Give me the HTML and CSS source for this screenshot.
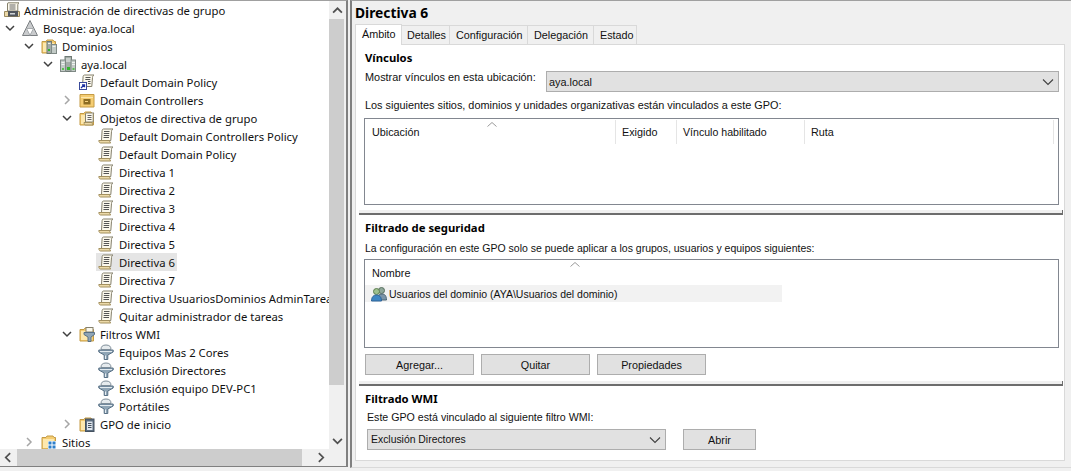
FILE: index.html
```html
<!DOCTYPE html>
<html lang="es">
<head>
<meta charset="utf-8">
<title>Administración de directivas de grupo</title>
<link rel="stylesheet" href="styles.css">
</head>
<body>
<svg class="defs" width="0" height="0" aria-hidden="true">
  <defs>
    <symbol id="scroll" viewBox="0 0 16 16">
      <path d="M5.500 1h9.500c-1 .6-1.500 1.500-1.500 2.500l-.7 9H3.500l.6-10C4.200 1.600 4.800 1 5.500 1z" fill="#fbf8ec" stroke="#85806c"/>
      <path d="M.8 12.500h10.700c.1 1 .5 1.700 1.200 2.500H2.500C1.500 15 .8 13.700.8 12.500z" fill="#ecd9a8" stroke="#a3905f"/>
      <path d="M6 3.500h5.500M5.800 5.500h5.500M5.700 7.500h5.500M5.500 9.500h5.500" stroke="#555" stroke-width="1.100"/>
    </symbol>
    <symbol id="gpolink" viewBox="0 0 16 16">
      <path d="M5.500 1h9.500c-1 .6-1.500 1.500-1.500 2.500l-.7 9H3.500l.6-10C4.200 1.600 4.800 1 5.500 1z" fill="#fbf8ec" stroke="#85806c"/>
      <path d="M6.500 3.500h5M6.300 5.500h5M9 7.500h2.500M9 9.500h2.500" stroke="#555" stroke-width="1.100"/>
      <rect x=".5" y="8.500" width="7" height="7" fill="#fff" stroke="#3a4a9a"/>
      <path d="M2 14l3-3M3 10.800h2.500v2.500" fill="none" stroke="#1c2fa0" stroke-width="1.300"/>
    </symbol>
    <symbol id="filter" viewBox="0 0 16 16">
      <path d="M.8 6h14.400v2L9.800 11v4.500H6.200V11L.8 8z" fill="#8fa5b6" stroke="#587085"/>
      <path d="M3 5.500c0-3 1.500-4.500 5-4.500s5 1.500 5 4.500z" fill="#e6ebee" stroke="#7e8d99"/>
      <path d="M2 7.500h12" stroke="#e3ebf0"/>
      <path d="M7.500 11.500v3.500" stroke="#e6edf2"/>
    </symbol>
    <symbol id="folder" viewBox="0 0 16 16">
      <path d="M1 3.500h4l1-1.500h6l1 1.500h1.500v11.500H1z" fill="#f5cd72" stroke="#c49b45"/>
      <path d="M2 5h11v9H2z" fill="#fde8ae"/>
    </symbol>
    <symbol id="server" viewBox="0 0 16 16">
      <rect x="5" y=".5" width="6.500" height="15" fill="#a3aca7" stroke="#6f7a75"/>
      <rect x=".5" y="4" width="5" height="11.500" fill="#c2cac6" stroke="#7f8985"/>
      <rect x="11" y="4" width="4.500" height="11.500" fill="#c2cac6" stroke="#7f8985"/>
      <path d="M6 3h4.500M6 5h4.500M1.500 6.500h3M12 6.500h3M1.500 8.500h3M12 8.500h3" stroke="#eef1ef"/>
      <rect x="7" y="11" width="3" height="3" fill="#32b52d"/>
      <rect x="2" y="12" width="2" height="2" fill="#58c24f"/>
      <rect x="12.500" y="12" width="2" height="2" fill="#58c24f"/>
    </symbol>
  </defs>
</svg>

<div class="app">
  <section class="left-pane">
    <div class="tree-body">
      <div class="tree">
        <div class="row lvl-0">
          <span class="twisty"></span>
          <svg class="icon" viewBox="0 0 16 16"><path d="M4 .8h11c-.8.500-1.200 1.200-1.200 2V9H3.500V2c0-.8.200-1.200.5-1.200z" fill="#fbf8ec" stroke="#85806c"/><path d="M5.500 3h6M5.500 5h6M5.500 7h6" stroke="#666"/><path d="M.5 9.500h15v5H.5z" fill="#ecd9a8" stroke="#9a8a5e"/><rect x="4" y="9" width="10" height="5.500" fill="#50565e"/><rect x="6" y="11" width="5" height="1.500" fill="#cfd4d8"/></svg>
          <span class="label">Administración de directivas de grupo</span>
        </div>
        <div class="row lvl-1">
          <svg class="twisty" viewBox="0 0 10 10"><path class="open" d="M1 3l4 4 4-4"/></svg>
          <svg class="icon" viewBox="0 0 16 16"><path d="M8 .5l7.500 15H.5z" fill="#c9cbcd" stroke="#7c8083"/><path d="M4.500 8.500h7L8 15.300z" fill="#fff" stroke="#a6aaad"/></svg>
          <span class="label">Bosque: aya.local</span>
        </div>
        <div class="row lvl-2">
          <svg class="twisty" viewBox="0 0 10 10"><path class="open" d="M1 3l4 4 4-4"/></svg>
          <svg class="icon" viewBox="0 0 16 16"><use href="#folder"/><rect x="6" y="3.500" width="4.500" height="12" fill="#a3aca7" stroke="#6f7a75"/><rect x="10.500" y="6.500" width="5" height="9" fill="#c2cac6" stroke="#7f8985"/><path d="M7 5.500h2.500M11.500 8.500h3" stroke="#eef1ef"/><rect x="7" y="11" width="2" height="2" fill="#32b52d"/></svg>
          <span class="label">Dominios</span>
        </div>
        <div class="row lvl-3">
          <svg class="twisty" viewBox="0 0 10 10"><path class="open" d="M1 3l4 4 4-4"/></svg>
          <svg class="icon"><use href="#server"/></svg>
          <span class="label">aya.local</span>
        </div>
        <div class="row lvl-4">
          <span class="twisty"></span>
          <svg class="icon"><use href="#gpolink"/></svg>
          <span class="label">Default Domain Policy</span>
        </div>
        <div class="row lvl-4">
          <svg class="twisty" viewBox="0 0 10 10"><path class="closed" d="M3 1l4 4-4 4"/></svg>
          <svg class="icon" viewBox="0 0 16 16"><path d="M1 2.500h14v12.500H1z" fill="#f5cd72" stroke="#c49b45"/><path d="M2 5.500h12" stroke="#fde8ae"/><rect x="4.500" y="7" width="7" height="5.500" fill="#8c6d22"/><path d="M6 9.500h3" stroke="#f6d27e"/></svg>
          <span class="label">Domain Controllers</span>
        </div>
        <div class="row lvl-4">
          <svg class="twisty" viewBox="0 0 10 10"><path class="open" d="M1 3l4 4 4-4"/></svg>
          <svg class="icon" viewBox="0 0 16 16"><use href="#folder"/><path d="M7 3h8c-.6.500-.8 1-.8 1.800V12H6.500V4c0-.5.100-1 .5-1z" fill="#fbf8ec" stroke="#85806c"/><path d="M8.500 5.500h4M8.500 7.500h4M8.500 9.500h4" stroke="#666"/><path d="M5 12.500h8c.2 1 .5 1.800 1 2.500H6.500C5.500 15 5 13.500 5 12.500z" fill="#ecd9a8" stroke="#a3905f"/></svg>
          <span class="label">Objetos de directiva de grupo</span>
        </div>
        <div class="row lvl-5"><span class="twisty"></span><svg class="icon"><use href="#scroll"/></svg><span class="label">Default Domain Controllers Policy</span></div>
        <div class="row lvl-5"><span class="twisty"></span><svg class="icon"><use href="#scroll"/></svg><span class="label">Default Domain Policy</span></div>
        <div class="row lvl-5"><span class="twisty"></span><svg class="icon"><use href="#scroll"/></svg><span class="label">Directiva 1</span></div>
        <div class="row lvl-5"><span class="twisty"></span><svg class="icon"><use href="#scroll"/></svg><span class="label">Directiva 2</span></div>
        <div class="row lvl-5"><span class="twisty"></span><svg class="icon"><use href="#scroll"/></svg><span class="label">Directiva 3</span></div>
        <div class="row lvl-5"><span class="twisty"></span><svg class="icon"><use href="#scroll"/></svg><span class="label">Directiva 4</span></div>
        <div class="row lvl-5"><span class="twisty"></span><svg class="icon"><use href="#scroll"/></svg><span class="label">Directiva 5</span></div>
        <div class="row lvl-5"><span class="twisty"></span><span class="selected"><svg class="icon"><use href="#scroll"/></svg><span class="label">Directiva 6</span></span></div>
        <div class="row lvl-5"><span class="twisty"></span><svg class="icon"><use href="#scroll"/></svg><span class="label">Directiva 7</span></div>
        <div class="row lvl-5"><span class="twisty"></span><svg class="icon"><use href="#scroll"/></svg><span class="label">Directiva UsuariosDominios AdminTareas</span></div>
        <div class="row lvl-5"><span class="twisty"></span><svg class="icon"><use href="#scroll"/></svg><span class="label">Quitar administrador de tareas</span></div>
        <div class="row lvl-4">
          <svg class="twisty" viewBox="0 0 10 10"><path class="open" d="M1 3l4 4 4-4"/></svg>
          <svg class="icon" viewBox="0 0 16 16"><use href="#folder"/><rect x="7" y="1.500" width="7" height="4.500" fill="#fbf8ec" stroke="#85806c"/><path d="M5 6.500h10.500v2L12 11v4.500H9V11L5 8.500z" fill="#8fa5b6" stroke="#587085"/></svg>
          <span class="label">Filtros WMI</span>
        </div>
        <div class="row lvl-5"><span class="twisty"></span><svg class="icon"><use href="#filter"/></svg><span class="label">Equipos Mas 2 Cores</span></div>
        <div class="row lvl-5"><span class="twisty"></span><svg class="icon"><use href="#filter"/></svg><span class="label">Exclusión Directores</span></div>
        <div class="row lvl-5"><span class="twisty"></span><svg class="icon"><use href="#filter"/></svg><span class="label">Exclusión equipo DEV-PC1</span></div>
        <div class="row lvl-5"><span class="twisty"></span><svg class="icon"><use href="#filter"/></svg><span class="label">Portátiles</span></div>
        <div class="row lvl-4">
          <svg class="twisty" viewBox="0 0 10 10"><path class="closed" d="M3 1l4 4-4 4"/></svg>
          <svg class="icon" viewBox="0 0 16 16"><use href="#folder"/><rect x="6.500" y="3" width="8.500" height="12.500" fill="#5b6d80" stroke="#44515f"/><rect x="8" y="5.500" width="5.500" height="8.500" fill="#dfe6ee"/><path d="M9 7.500h3.500M9 9.500h3.500M9 11.500h3.500" stroke="#44515f"/></svg>
          <span class="label">GPO de inicio</span>
        </div>
        <div class="row lvl-2">
          <svg class="twisty" viewBox="0 0 10 10"><path class="closed" d="M3 1l4 4-4 4"/></svg>
          <svg class="icon" viewBox="0 0 16 16"><use href="#folder"/><rect x="7" y="7" width="8.500" height="8" fill="#fff"/><path d="M7.500 7.500h3v3h-3zM11.500 7.500h3v3h-3zM7.500 11.500h3v3h-3zM11.500 11.500h3v3h-3z" fill="#2e7fc9"/></svg>
          <span class="label">Sitios</span>
        </div>
      </div>
      <div class="vscroll">
        <svg class="sb-arrow" viewBox="0 0 10 10"><path d="M1 7l4-4 4 4"/></svg>
        <div class="vtrack"><div class="vthumb"></div></div>
        <svg class="sb-arrow" viewBox="0 0 10 10"><path d="M1 3.500l4 4 4-4"/></svg>
      </div>
    </div>
    <div class="hscroll">
      <svg class="sb-arrow" viewBox="0 0 10 10"><path d="M6.500 1l-4 4 4 4"/></svg>
      <div class="htrack"><div class="hthumb"></div></div>
      <svg class="sb-arrow" viewBox="0 0 10 10"><path d="M3.500 1l4 4-4 4"/></svg>
    </div>
  </section>

  <section class="right-pane">
    <h1 class="title">Directiva 6</h1>
    <div class="tabs">
      <span class="tab active">Ámbito</span>
      <span class="tab tab-details">Detalles</span>
      <span class="tab tab-config">Configuración</span>
      <span class="tab tab-deleg">Delegación</span>
      <span class="tab tab-state">Estado</span>
    </div>
    <div class="tab-page">
      <div class="links">
        <h2 class="heading">Vínculos</h2>
        <div class="show-row">
          <span class="show-label">Mostrar vínculos en esta ubicación:</span>
          <div class="combo combo-wide"><span>aya.local</span><svg class="chev" viewBox="0 0 12 8"><path d="M1 1.500l5 5 5-5"/></svg></div>
        </div>
        <p class="note note-links">Los siguientes sitios, dominios y unidades organizativas están vinculados a este GPO:</p>
        <div class="list list-links">
          <div class="list-head">
            <svg class="sort" viewBox="0 0 10 5"><path d="M.5 4.500L5 .5l4.500 4"/></svg>
            <span class="col col-loc">Ubicación</span>
            <span class="col col-req">Exigido</span>
            <span class="col col-en">Vínculo habilitado</span>
            <span class="col col-path">Ruta</span>
          </div>
        </div>
      </div>
      <div class="splitter"></div>
      <div class="security">
        <h2 class="heading">Filtrado de seguridad</h2>
        <p class="note note-sec">La configuración en este GPO solo se puede aplicar a los grupos, usuarios y equipos siguientes:</p>
        <div class="list list-sec">
          <div class="list-head head-sec">
            <svg class="sort sort-sec" viewBox="0 0 10 5"><path d="M.5 4.500L5 .5l4.500 4"/></svg>
            <span class="col">Nombre</span>
          </div>
          <div class="list-item">
            <svg class="user-icon" viewBox="0 0 16 16"><circle cx="10.500" cy="4.500" r="3" fill="#8fa79a" stroke="#58705f"/><path d="M6 14c0-4 2-6 5-6s4.500 2 4.500 6z" fill="#7c95a8" stroke="#4c6474"/><circle cx="5.500" cy="5.500" r="3" fill="#9dc08e" stroke="#5c7d4f"/><path d="M.5 15c0-4 2-6 5-6s5 2 5 6z" fill="#3f86c2" stroke="#2c6397"/></svg>
            <span>Usuarios del dominio (AYA\Usuarios del dominio)</span>
          </div>
        </div>
        <div class="buttons">
          <button class="btn">Agregar...</button>
          <button class="btn">Quitar</button>
          <button class="btn">Propiedades</button>
        </div>
      </div>
      <div class="splitter"></div>
      <div class="wmi">
        <h2 class="heading">Filtrado WMI</h2>
        <p class="note note-wmi">Este GPO está vinculado al siguiente filtro WMI:</p>
        <div class="wmi-row">
          <div class="combo combo-wmi"><span>Exclusión Directores</span><svg class="chev" viewBox="0 0 12 8"><path d="M1 1.500l5 5 5-5"/></svg></div>
          <button class="btn btn-open">Abrir</button>
        </div>
      </div>
    </div>
  </section>
</div>
</body>
</html>
```
FILE: styles.css
```css
* { box-sizing: border-box; }
html, body { margin: 0; height: 100%; }
body {
  width: 1071px;
  height: 471px;
  overflow: hidden;
  background: #f0f0f0;
  color: #111;
  font-family: "Noto Sans", "Open Sans", sans-serif;
  font-size: 11.3px;
}
.defs { display: block; height: 0; }
.app { display: flex; align-items: flex-start; height: 471px; }

/* left pane */
.left-pane {
  width: 348px;
  height: 467px;
  flex: none;
  background: #fff;
  border-top: 1px solid #a0a0a0;
  border-bottom: 1px solid #808080;
  border-right: 2px solid #808080;
  display: flex;
  flex-direction: column;
}
.tree-body { display: flex; height: 448px; flex: none; }
.tree { width: 329px; flex: none; overflow: hidden; }
.row { display: flex; align-items: center; height: 18px; white-space: nowrap; }
.twisty { width: 10px; height: 10px; flex: none; margin-right: 7px; }
.twisty path { fill: none; stroke-width: 1.5; }
.twisty .open { stroke: #404040; }
.twisty .closed { stroke: #a6a6a6; }
.icon { width: 16px; height: 16px; flex: none; margin-right: 5px; }
.lvl-0 .twisty { width: 4px; margin-right: 0; }
.lvl-0 .icon { margin-right: 4px; }
.lvl-1 { padding-left: 5px; }
.lvl-2 { padding-left: 24px; }
.lvl-3 { padding-left: 43px; }
.lvl-4 { padding-left: 62px; }
.lvl-5 { padding-left: 81px; }
.selected {
  display: flex;
  align-items: center;
  height: 18px;
  width: 81px;
  margin-left: -2px;
  padding-left: 2px;
  background: #e5e5e5;
}

.vscroll { width: 17px; flex: none; background: #f0f0f0; display: flex; flex-direction: column; padding-top: 1px; }
.hscroll { height: 17px; flex: none; background: #f0f0f0; display: flex; padding-right: 17px; }
.sb-arrow { width: 17px; height: 17px; flex: none; padding: 3px; }
.sb-arrow path { fill: none; stroke: #505050; stroke-width: 1.6; }
.vtrack { flex: 1; }
.vthumb { width: 15px; height: 366px; background: #cdcdcd; }
.htrack { flex: 1; }
.hthumb { width: 285px; height: 100%; background: #cdcdcd; }

/* right pane */
.right-pane {
  width: 721px;
  margin-left: 2px;
  height: 468px;
  flex: none;
  border-top: 1px solid #a0a0a0;
  border-left: 2px solid #808080;
  border-bottom: 1px solid #d9d9d9;
  padding: 0 6px 6px 3px;
  display: flex;
  flex-direction: column;
  background: #f0f0f0;
  font-family: "Liberation Sans", Arial, sans-serif;
  font-size: 10.8px;
}
.title { margin: 2px 0 0 0; height: 20px; font: 700 13.8px/20px "Noto Sans", sans-serif; color: #000; }
.tabs { display: flex; align-items: flex-end; height: 21px; position: relative; z-index: 1; }
.tab {
  height: 19px;
  line-height: 19px;
  border: 1px solid #d9d9d9;
  border-bottom: 0;
  border-left: 0;
  background: #f0f0f0;
  color: #111;
  padding-left: 6px;
}
.tab-details { width: 48px; padding-left: 5px; }
.tab-config { width: 78px; }
.tab-deleg { width: 66px; }
.tab-state { width: 43px; }
.tab.active { width: 47px; height: 21px; padding-left: 6px; margin-bottom: -1px; background: #fff; border-left: 1px solid #d9d9d9; line-height: 18px; }
.tab-page {
  flex: 1;
  background: #fff;
  border: 1px solid #d9d9d9;
  display: flex;
  flex-direction: column;
  padding-left: 8px;
  color: #111;
}
.heading { margin: 0 0 0 1px; font: 700 11.3px/16px "Noto Sans", sans-serif; color: #000; }
.note { margin: 0 0 0 1px; white-space: nowrap; }
.links { height: 165px; padding-top: 5px; }
.show-row { display: flex; align-items: flex-start; height: 23px; margin: 3px 0 0 1px; }
.show-label { width: 181px; flex: none; line-height: 16px; white-space: nowrap; font-size: 10.9px; }
.combo {
  display: flex;
  align-items: center;
  justify-content: space-between;
  background: #e1e1e1;
  border: 1px solid #adadad;
  padding: 0 4px 0 3px;
  height: 21px;
  flex: none;
}
.combo-wide { width: 513px; margin-top: 2px; padding-left: 2px; font-size: 10.9px; }
.chev { width: 12px; height: 8px; }
.chev path { fill: none; stroke: #404040; stroke-width: 1.1; }
.note-links { margin-top: 5px; line-height: 16px; font-size: 10.88px; }
.list { border: 1px solid #828790; background: #fff; position: relative; }
.list-links { width: 695px; height: 87px; margin-top: 5px; }
.list-head { display: flex; height: 24px; margin-top: 1px; align-items: center; position: relative; }
.sort { position: absolute; left: 122px; top: 2px; width: 10px; height: 5px; }
.sort path { fill: none; stroke: #9a9a9a; }
.col { display: block; padding-left: 6px; line-height: 24px; height: 24px; border-right: 1px solid #e5e5e5; flex: none; }
.col-loc { width: 251px; padding-left: 7px; }
.col-req { width: 61px; }
.col-en { width: 128px; font-size: 10.6px; }
.col-path { width: 249px; }
.splitter { height: 5px; flex: none; margin-left: -5px; width: 704px; background: #f0f0f0; border-bottom: 2px solid #6d6d6d; border-right: 1px solid #6d6d6d; }
.security { height: 166px; padding-top: 5px; }
.note-sec { margin-top: 4px; line-height: 16px; font-size: 10.5px; }
.list-sec { width: 695px; height: 89px; margin-top: 3px; }
.sort-sec { left: 205px; top: 1px; }
.head-sec .col { border-right: 0; padding-left: 7px; }
.list-item { display: flex; align-items: center; width: 417px; height: 17px; background: #f2f2f2; padding-left: 6px; font-size: 10.5px; }
.user-icon { width: 16px; height: 16px; margin-right: 2px; flex: none; }
.buttons { display: flex; gap: 7px; margin-top: 6px; margin-left: 1px; }
.btn {
  font: inherit;
  color: #111;
  width: 109px;
  height: 21px;
  padding: 0;
  background: #e1e1e1;
  border: 1px solid #adadad;
}
.wmi { padding-top: 5px; }
.note-wmi { margin: 2px 0 0 3px; line-height: 16px; font-size: 10.65px; }
.wmi-row { display: flex; gap: 17px; margin: 4px 0 0 3px; }
.combo-wmi { width: 299px; font-size: 10.4px; }
.btn-open { width: 73px; }
```
